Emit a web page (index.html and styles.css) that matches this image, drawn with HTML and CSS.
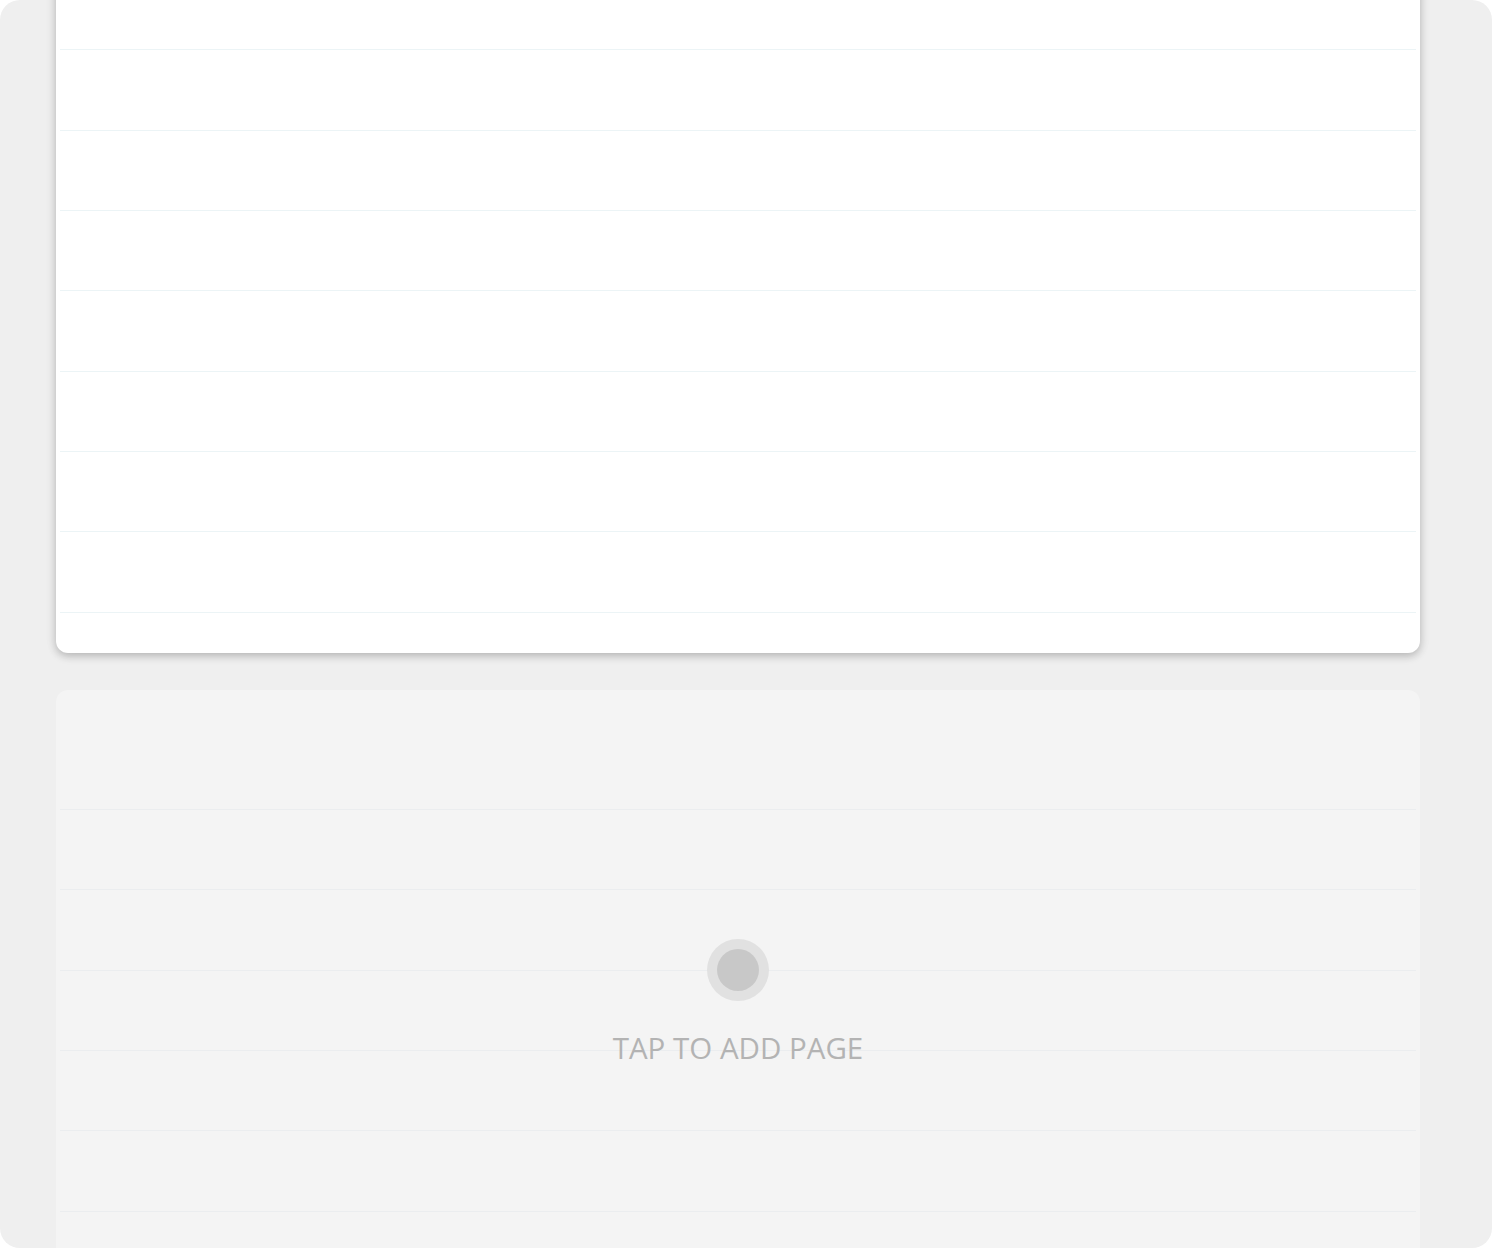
FILE: index.html
```html
<!DOCTYPE html>
<html lang="en">
<head>
<meta charset="utf-8">
<title>Pages</title>
<link rel="stylesheet" href="styles.css">
</head>
<body>
<div class="viewport">
  <div class="scroller">
    <div class="page page-filled">
      <div class="row"></div><div class="row"></div><div class="row"></div><div class="row"></div>
      <div class="row"></div><div class="row"></div><div class="row"></div><div class="row"></div>
    </div>
    <div class="page page-empty">
      <div class="row"></div><div class="row"></div><div class="row"></div><div class="row"></div>
      <div class="row"></div><div class="row"></div><div class="row"></div><div class="row"></div>
      <div class="add-overlay">
        <div class="add-dot"><span class="add-dot-inner"></span></div>
        <div class="add-label">TAP TO ADD PAGE</div>
      </div>
    </div>
  </div>
</div>
</body>
</html>
```
FILE: styles.css
```css
html, body {
  margin: 0;
  padding: 0;
  background: #ffffff;
}
body {
  font-family: "Open Sans", "Noto Sans", "DejaVu Sans", sans-serif;
}
.viewport {
  width: 1492px;
  height: 1248px;
  background: #efefef;
  border-radius: 20px;
  overflow: hidden;
}
.scroller {
  display: flex;
  flex-direction: column;
  gap: 37px;
  padding: 0 72px 0 56px;
  margin-top: -70px;
}
.page {
  position: relative;
  width: 1364px;
  box-sizing: border-box;
  padding: 40px 4px 40px 4px;
  border-radius: 12px;
}
.page-filled {
  background: #ffffff;
  box-shadow: 0 3px 8px rgba(0, 0, 0, 0.22), 0 0 14px rgba(0, 0, 0, 0.06);
}
.page-empty {
  background: #f4f4f4;
}
.row {
  height: 80.33px;
  box-sizing: border-box;
  border-bottom: 1px solid #ecf4f6;
}
.page-empty .row {
  border-bottom-color: #ebedef;
}
.add-overlay {
  position: absolute;
  left: 0;
  right: 0;
  top: 249px;
  display: flex;
  flex-direction: column;
  align-items: center;
  gap: 30px;
}
.add-dot {
  width: 62px;
  height: 62px;
  border-radius: 50%;
  background: #e1e1e1;
  display: flex;
  align-items: center;
  justify-content: center;
}
.add-dot-inner {
  width: 42px;
  height: 42px;
  border-radius: 50%;
  background: #c8c8c8;
}
.add-label {
  font-size: 29.5px;
  font-weight: 500;
  line-height: 34px;
  color: #b3b3b3;
  letter-spacing: 0;
}
```
